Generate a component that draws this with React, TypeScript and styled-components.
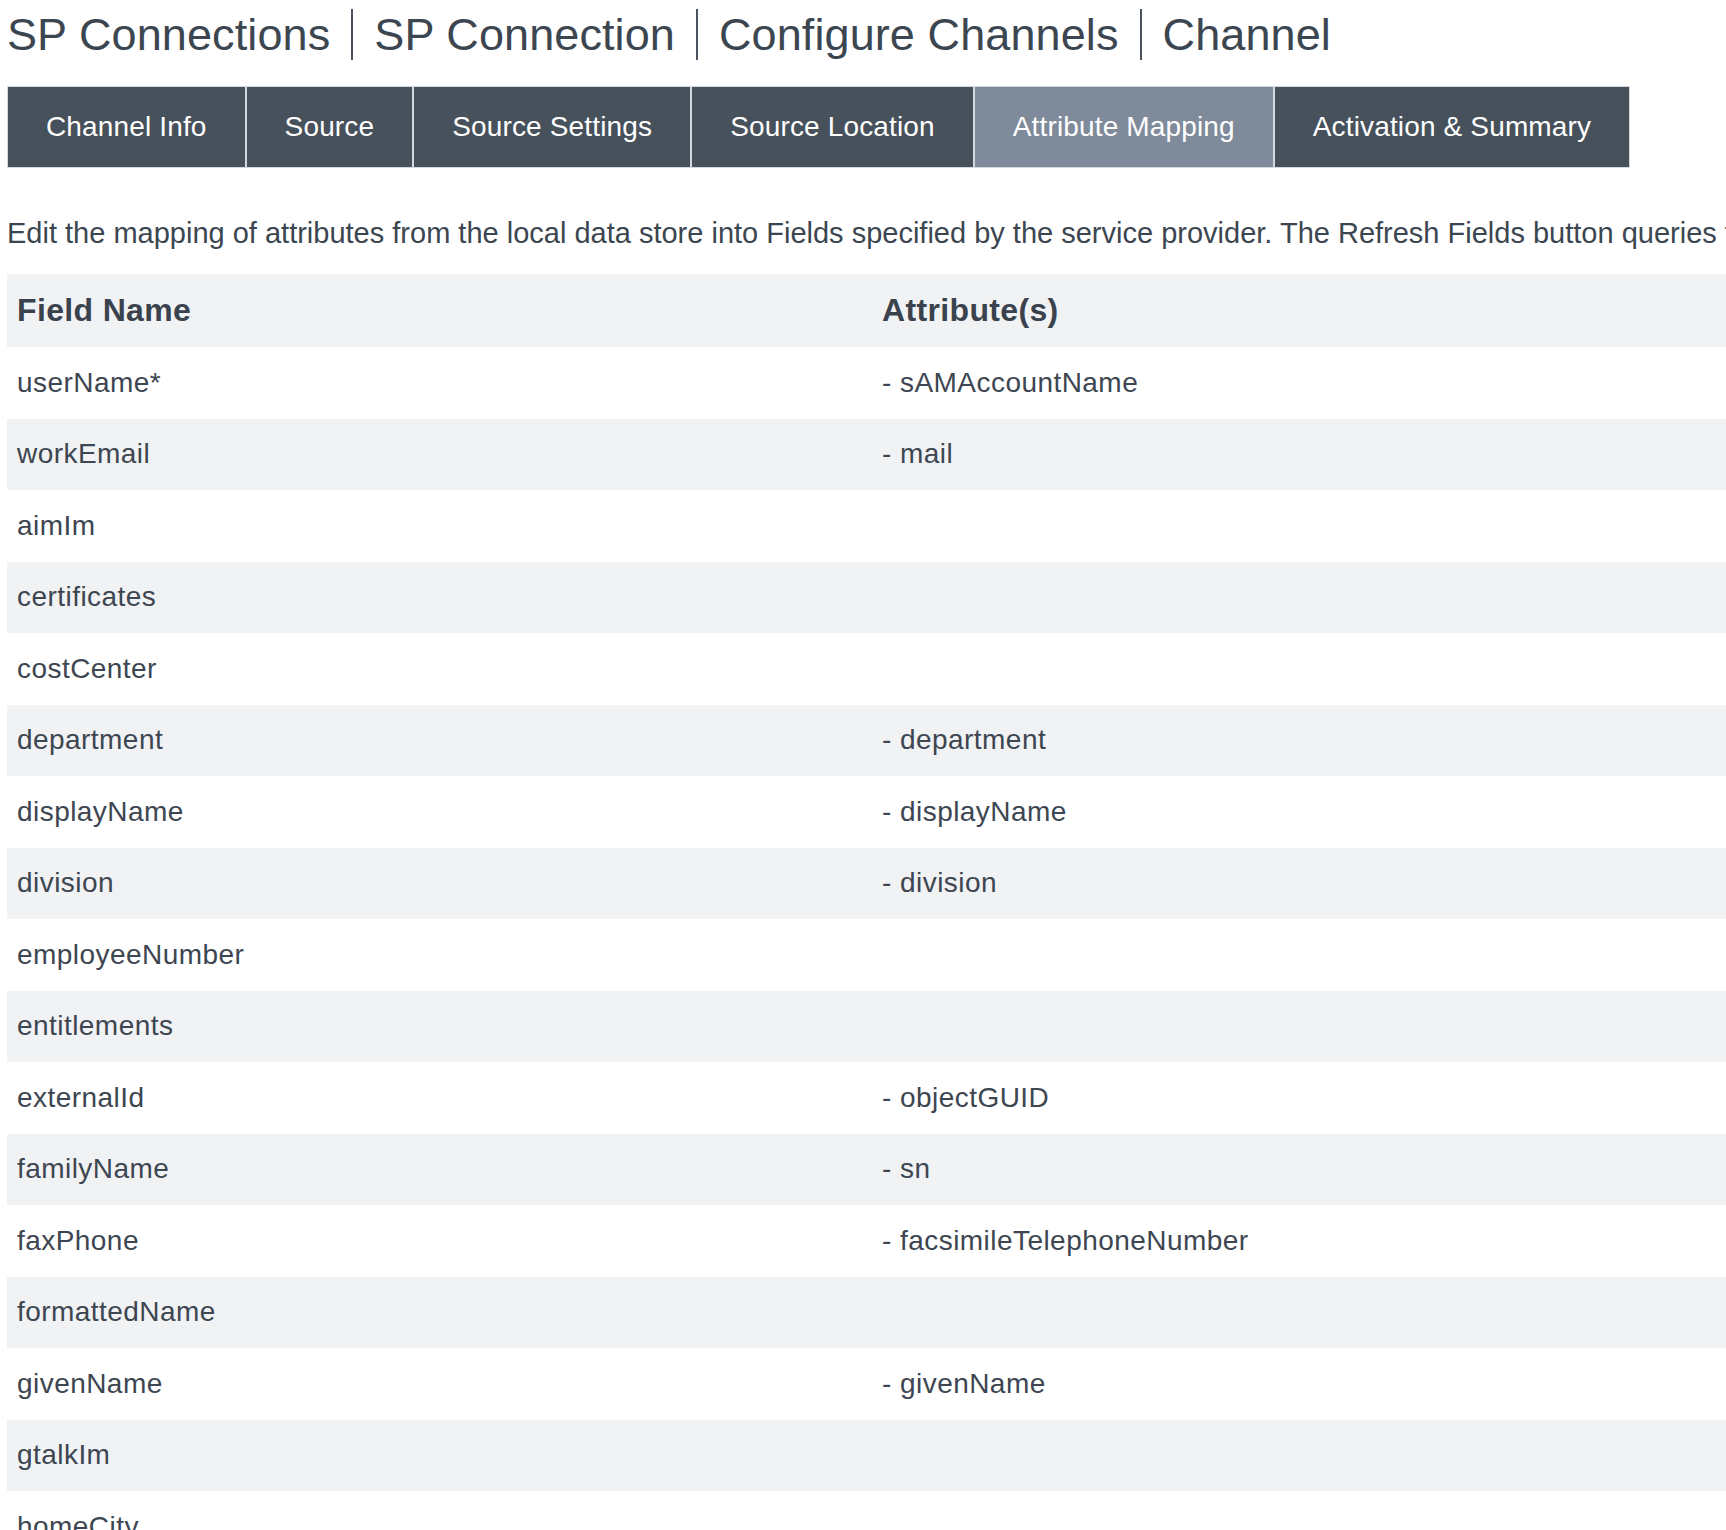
import React from "react";
import styled, { createGlobalStyle } from "styled-components";

const GlobalStyle = createGlobalStyle`
  html, body {
    margin: 0;
    padding: 0;
    background: #ffffff;
    overflow: hidden;
  }
  body {
    font-family: "Liberation Sans", Arial, Helvetica, sans-serif;
    color: #3c4650;
  }
`;

const Page = styled.div`
  padding: 9px 0 0 7px;
  width: 1730px;
`;

const Breadcrumb = styled.nav`
  display: flex;
  align-items: center;
`;

const Crumb = styled.span`
  font-size: 45px;
  line-height: 51px;
  letter-spacing: 0.1px;
  padding: 0 21px;
  border-left: 2px solid #4a535d;
  white-space: nowrap;
  color: #3c4650;

  &:first-child {
    padding-left: 0;
    border-left: none;
  }
`;

const TabBar = styled.div`
  display: flex;
  margin-top: 26px;
`;

const Tab = styled.div<{ $active?: boolean }>`
  box-sizing: border-box;
  height: 82px;
  display: flex;
  align-items: center;
  justify-content: center;
  padding: 0 38px;
  border: 1px solid #d4d7db;
  background: ${(p) => (p.$active ? "#7f8a9a" : "#47515b")};
  color: #ffffff;
  font-size: 28px;
  letter-spacing: 0.15px;
  white-space: nowrap;
`;

const Description = styled.p`
  margin: 48px 0 0;
  font-size: 29px;
  line-height: 34px;
  white-space: nowrap;
  color: #3c4650;
`;

const Table = styled.table`
  margin-top: 24px;
  width: 1730px;
  border-collapse: collapse;
  table-layout: fixed;
`;

const HeadCell = styled.th`
  height: 73px;
  padding: 0 10px;
  background: #f1f2f4;
  text-align: left;
  font-size: 32px;
  font-weight: 700;
  letter-spacing: 0.35px;
  color: #3a434d;
  width: 50%;
`;

const Row = styled.tr`
  &:nth-child(even) {
    background: #f1f2f4;
  }
`;

const Cell = styled.td`
  height: 71.5px;
  padding: 0 10px;
  font-size: 28px;
  letter-spacing: 0.45px;
  color: #3d4651;
  white-space: nowrap;
`;

const tabs = [
  "Channel Info",
  "Source",
  "Source Settings",
  "Source Location",
  "Attribute Mapping",
  "Activation & Summary",
];

const rows: [string, string][] = [
  ["userName*", "sAMAccountName"],
  ["workEmail", "mail"],
  ["aimIm", ""],
  ["certificates", ""],
  ["costCenter", ""],
  ["department", "department"],
  ["displayName", "displayName"],
  ["division", "division"],
  ["employeeNumber", ""],
  ["entitlements", ""],
  ["externalId", "objectGUID"],
  ["familyName", "sn"],
  ["faxPhone", "facsimileTelephoneNumber"],
  ["formattedName", ""],
  ["givenName", "givenName"],
  ["gtalkIm", ""],
  ["homeCity", ""],
  ["homeCountry", ""],
  ["homeEmail", ""],
];

export default function App() {
  return (
    <>
      <GlobalStyle />
      <Page>
        <Breadcrumb>
          <Crumb>SP Connections</Crumb>
          <Crumb>SP Connection</Crumb>
          <Crumb>Configure Channels</Crumb>
          <Crumb>Channel</Crumb>
        </Breadcrumb>
        <TabBar>
          {tabs.map((t) => (
            <Tab key={t} $active={t === "Attribute Mapping"}>
              {t}
            </Tab>
          ))}
        </TabBar>
        <Description>
          Edit the mapping of attributes from the local data store into Fields
          specified by the service provider. The Refresh Fields button queries
          the service provider for the latest list of Fields.
        </Description>
        <Table>
          <thead>
            <tr>
              <HeadCell>Field Name</HeadCell>
              <HeadCell>Attribute(s)</HeadCell>
            </tr>
          </thead>
          <tbody>
            {rows.map(([field, attr]) => (
              <Row key={field}>
                <Cell>{field}</Cell>
                <Cell>{attr ? `- ${attr}` : ""}</Cell>
              </Row>
            ))}
          </tbody>
        </Table>
      </Page>
    </>
  );
}
